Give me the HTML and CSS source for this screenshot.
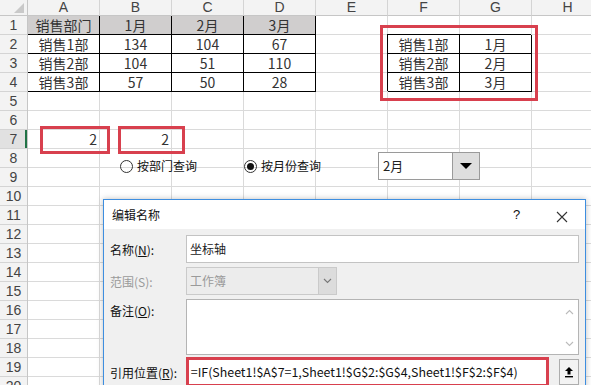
FILE: index.html
```html
<!DOCTYPE html>
<html lang="zh-CN">
<head>
    <meta charset="UTF-8">
    <title>编辑名称</title>
    <link rel="stylesheet" href="styles.css">
</head>
<body>
    <div class="sheet">
        <div class="corner"><span class="tri"></span></div>
        <div class="colh">A</div>
        <div class="colh">B</div>
        <div class="colh">C</div>
        <div class="colh">D</div>
        <div class="colh">E</div>
        <div class="colh">F</div>
        <div class="colh">G</div>
        <div class="colh">H</div>

        <div class="rowheads">
            <div>1</div><div>2</div><div>3</div><div>4</div><div>5</div>
            <div>6</div><div class="sel">7</div><div>8</div><div>9</div><div>10</div>
            <div>11</div><div>12</div><div>13</div><div>14</div><div>15</div>
            <div>16</div><div>17</div><div>18</div><div>19</div><div>20</div>
        </div>

        <div class="cells"></div>

        <div class="data">
            <div class="hd">销售部门</div><div class="hd">1月</div><div class="hd">2月</div><div class="hd">3月</div>
            <div>销售1部</div><div>134</div><div>104</div><div>67</div>
            <div>销售2部</div><div>104</div><div>51</div><div>110</div>
            <div>销售3部</div><div>57</div><div>50</div><div>28</div>
        </div>

        <div class="lookup">
            <div>销售1部</div><div>1月</div>
            <div>销售2部</div><div>2月</div>
            <div>销售3部</div><div>3月</div>
        </div>

        <div class="num a7">2</div>
        <div class="num b7">2</div>
    </div>

    <!-- red marks drawn over the sheet -->
    <div class="mark mark-lookup"></div>
    <div class="mark mark-a7"></div>
    <div class="mark mark-b7"></div>

    <div class="radios">
        <label class="radio"><span class="dot"></span>按部门查询</label>
        <label class="radio on"><span class="dot"></span>按月份查询</label>
    </div>

    <div class="combo">
        <span class="combo-text">2月</span>
        <span class="combo-btn"><span class="caret"></span></span>
    </div>

    <div class="dialog">
        <div class="titlebar">
            <span class="title">编辑名称</span>
            <span class="help">?</span>
            <span class="close">
                <svg width="12" height="12" viewBox="0 0 12 12"><path d="M1 1L11 11M11 1L1 11" stroke="#333" stroke-width="1.1" fill="none"/></svg>
            </span>
        </div>
        <div class="body">
            <div class="row">
                <span class="label">名称(<u>N</u>):</span>
                <div class="field input">坐标轴</div>
            </div>
            <div class="row">
                <span class="label off">范围(S):</span>
                <div class="field select">
                    <span class="select-text">工作簿</span>
                    <span class="select-btn">
                        <svg width="9" height="6" viewBox="0 0 9 6"><path d="M1 1L4.5 4.5L8 1" stroke="#777" stroke-width="1.1" fill="none"/></svg>
                    </span>
                </div>
            </div>
            <div class="row top">
                <span class="label">备注(<u>O</u>):</span>
                <div class="field memo">
                    <span class="scroll">
                        <svg width="9" height="6" viewBox="0 0 9 6"><path d="M1 5L4.5 1.5L8 5" stroke="#bbb" stroke-width="1.1" fill="none"/></svg>
                        <svg width="9" height="6" viewBox="0 0 9 6"><path d="M1 1L4.5 4.5L8 1" stroke="#bbb" stroke-width="1.1" fill="none"/></svg>
                    </span>
                </div>
            </div>
            <div class="row ref">
                <span class="label">引用位置(<u>R</u>):</span>
                <div class="field formula">=IF(Sheet1!$A$7=1,Sheet1!$G$2:$G$4,Sheet1!$F$2:$F$4)</div>
                <span class="collapse">
                    <svg width="10" height="12" viewBox="0 0 10 12"><path d="M5 1L1 5H3.5V8.5H6.5V5H9Z" fill="#000"/><rect x="1" y="10" width="8" height="1.4" fill="#000"/></svg>
                </span>
            </div>
        </div>
    </div>
</body>
</html>
```

FILE: styles.css
```css
body {
    margin: 0;
    width: 591px;
    height: 385px;
    overflow: hidden;
    position: relative;
    background-color: #fff;
    font-family: "Noto Sans CJK SC", "Liberation Sans", sans-serif;
    color: #222;
}

.sheet {
    display: grid;
    grid-template-columns: 28px repeat(8, 72px);
    grid-template-rows: 16px repeat(20, 19px);
    width: 604px;
}

.corner {
    position: relative;
    background-color: #f3f3f3;
    border-right: 1px solid #c6c6c6;
    border-bottom: 1px solid #c6c6c6;
}

.tri {
    position: absolute;
    right: 3px;
    bottom: 2px;
    border-left: 10px solid transparent;
    border-bottom: 10px solid #c9c9c9;
}

.colh {
    background-color: #f3f3f3;
    border-right: 1px solid #d4d4d4;
    border-bottom: 1px solid #c6c6c6;
    text-align: center;
    font-size: 14px;
    line-height: 15px;
    color: #444;
    font-family: "Liberation Sans", sans-serif;
}

.rowheads {
    grid-column: 1;
    grid-row: 2 / -1;
    display: flex;
    flex-direction: column;
    background-color: #f3f3f3;
    border-right: 1px solid #c6c6c6;
}

.rowheads div {
    height: 19px;
    box-sizing: border-box;
    border-bottom: 1px solid #d4d4d4;
    text-align: center;
    font-family: "Liberation Sans", sans-serif;
    font-size: 14px;
    line-height: 19px;
    color: #444;
}

.rowheads .sel {
    background-color: #e1e1e1;
    box-shadow: inset -2px 0 0 #217346;
}

.cells {
    grid-column: 2 / -1;
    grid-row: 2 / -1;
    background-image:
        linear-gradient(to left, #dadada 1px, transparent 1px),
        linear-gradient(to top, #dadada 1px, transparent 1px);
    background-size: 72px 19px;
}

.data {
    grid-column: 2 / 6;
    grid-row: 2 / 6;
    display: grid;
    grid-template-columns: repeat(4, 72px);
    grid-template-rows: repeat(4, 19px);
    background-color: #fff;
}

.lookup {
    grid-column: 7 / 9;
    grid-row: 3 / 6;
    display: grid;
    grid-template-columns: repeat(2, 72px);
    grid-template-rows: repeat(3, 19px);
    background-color: #fff;
    box-shadow: -1px -1px 0 #000;
}

.data div,
.lookup div {
    box-sizing: border-box;
    border-right: 1px solid #000;
    border-bottom: 1px solid #000;
    text-align: center;
    font-size: 14px;
    line-height: 18px;
    color: #333;
}

.data .hd {
    background-color: #d0cece;
}

.num {
    grid-row: 8;
    text-align: right;
    padding-right: 3px;
    font-size: 14px;
    line-height: 19px;
    color: #333;
}

.a7 { grid-column: 2; }
.b7 { grid-column: 3; }

.mark {
    position: absolute;
    border: 3px solid #d8404e;
    box-sizing: border-box;
}

.mark-lookup { left: 380px; top: 25px; width: 158px; height: 76px; }
.mark-a7 { left: 40px; top: 126px; width: 70px; height: 28px; }
.mark-b7 { left: 118px; top: 126px; width: 67px; height: 28px; }

.radios {
    position: absolute;
    left: 120px;
    top: 158px;
    display: flex;
}

.radio {
    width: 124px;
    display: flex;
    align-items: center;
    gap: 4px;
    font-size: 12px;
    line-height: 16px;
    color: #111;
}

.dot {
    width: 13px;
    height: 13px;
    box-sizing: border-box;
    border: 1px solid #333;
    border-radius: 50%;
    display: flex;
    align-items: center;
    justify-content: center;
}

.radio.on .dot::after {
    content: "";
    width: 7px;
    height: 7px;
    border-radius: 50%;
    background-color: #111;
}

.combo {
    position: absolute;
    left: 378px;
    top: 152px;
    width: 102px;
    height: 28px;
    box-sizing: border-box;
    border: 1px solid #9a9a9a;
    background-color: #fff;
    display: flex;
}

.combo-text {
    flex: 1;
    padding-left: 4px;
    font-size: 13px;
    line-height: 26px;
}

.combo-btn {
    width: 26px;
    background-color: #dedede;
    border-left: 1px solid #9a9a9a;
    display: flex;
    align-items: center;
    justify-content: center;
}

.caret {
    border-left: 6px solid transparent;
    border-right: 6px solid transparent;
    border-top: 6px solid #000;
}

.dialog {
    position: absolute;
    left: 103px;
    top: 199px;
    width: 483px;
    height: 200px;
    box-sizing: border-box;
    border: 1px solid #3d8ee0;
    background-color: #f0f0f0;
    box-shadow: 0 0 6px rgba(0, 0, 0, 0.25);
}

.titlebar {
    height: 29px;
    background-color: #fff;
    display: flex;
    align-items: center;
    padding-left: 8px;
    font-size: 12px;
    color: #111;
}

.title {
    flex: 1;
}

.help {
    width: 12px;
    font-size: 13px;
    margin-right: 31px;
    font-family: "Liberation Sans", sans-serif;
}

.close {
    width: 12px;
    height: 12px;
    margin-right: 17px;
}

.body {
    padding: 6px 6px 0 6px;
}

.row {
    display: flex;
    align-items: center;
    margin-bottom: 4px;
}

.row.top {
    align-items: flex-start;
    margin-bottom: 2px;
}

.label {
    width: 76px;
    font-size: 12px;
    color: #111;
}

.row.top .label {
    padding-top: 3px;
}

.label.off {
    color: #9a9a9a;
}

.field {
    box-sizing: border-box;
    font-size: 12px;
}

.input {
    width: 393px;
    height: 28px;
    border: 1px solid #c3c3c3;
    background-color: #fff;
    padding-left: 3px;
    line-height: 26px;
}

.select {
    width: 151px;
    height: 28px;
    border: 1px solid #cacaca;
    background-color: #ececec;
    display: flex;
}

.select-text {
    flex: 1;
    padding-left: 3px;
    line-height: 26px;
    color: #9a9a9a;
}

.select-btn {
    width: 17px;
    background-color: #dcdcdc;
    border-left: 1px solid #cacaca;
    display: flex;
    align-items: center;
    justify-content: center;
}

.memo {
    width: 393px;
    height: 56px;
    border: 1px solid #b4b4b4;
    background-color: #fff;
    display: flex;
    justify-content: flex-end;
}

.scroll {
    width: 17px;
    display: flex;
    flex-direction: column;
    justify-content: space-between;
    align-items: center;
    padding: 9px 0 7px;
}

.formula {
    width: 364px;
    height: 30px;
    border: 3px solid #d8404e;
    background-color: #fff;
    padding-left: 2px;
    line-height: 24px;
    white-space: nowrap;
    font-size: 12.4px;
    color: #111;
}

.collapse {
    width: 20px;
    height: 26px;
    margin-left: 10px;
    box-sizing: border-box;
    border: 1px solid #adadad;
    background-color: #f3f3f3;
    display: flex;
    align-items: center;
    justify-content: center;
}
```
